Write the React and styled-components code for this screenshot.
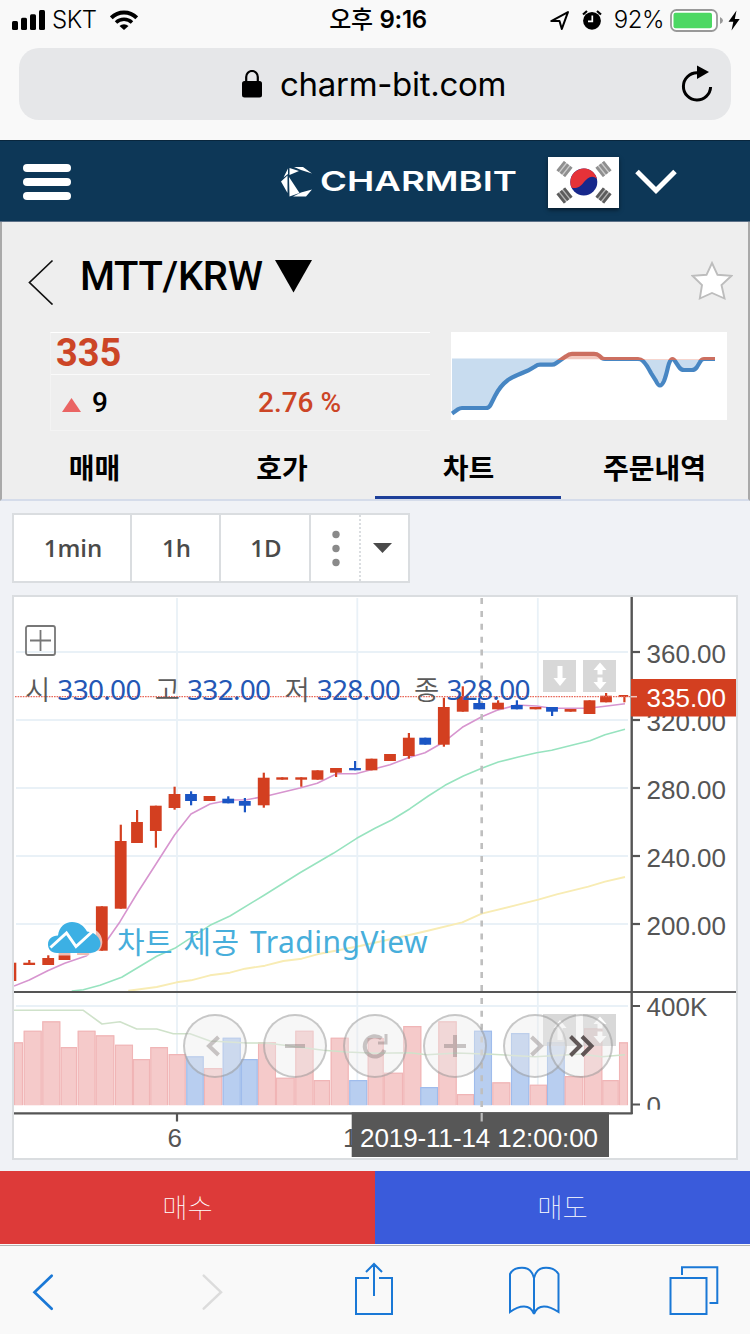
import React from "react";
import styled, { createGlobalStyle } from "styled-components";

const RED = "#d33f20";
const BLUE = "#1a55c4";

// [x, body top, body bottom, high, low, blue]
const candles = [
  [29.2, 962.7, 965, 960, 965],
  [48.2, 958, 965, 955.3, 965],
  [64.5, 953, 960, 953, 960],
  [83, 950, 955, 950, 955],
  [101.8, 906.3, 950.7, 906.3, 950.7],
  [120.7, 841, 908.7, 824.7, 908.7],
  [137, 822, 843, 810, 843],
  [155.8, 805.7, 831, 805.7, 847.7],
  [174.5, 794, 808, 786.7, 809.7],
  [191, 794, 801, 791.3, 805.3, 1],
  [209.5, 796, 801, 796, 801],
  [228.2, 798.7, 803.3, 796.3, 803.3, 1],
  [244.8, 801, 805.7, 798, 812.3, 1],
  [263.7, 777.7, 805.3, 772.7, 807.7],
  [282.2, 777.3, 779.7, 777.3, 779.7],
  [301.2, 777.3, 779.7, 777.3, 786.7],
  [317.5, 770.3, 779.7, 770.3, 779.7],
  [336, 768, 772.7, 768, 777],
  [355, 768, 770.3, 761, 770.3, 1],
  [371.5, 758.7, 770.3, 758.7, 770.3],
  [390, 754, 761, 754, 761],
  [408.8, 737.7, 756, 733, 758.7],
  [425.2, 737.7, 744.7, 737.7, 744.7, 1],
  [443.8, 707, 744.7, 697.7, 746.7],
  [462.7, 696, 711.7, 686.3, 711.7],
  [479.2, 703, 709.3, 697.7, 709.3, 1],
  [498, 702.7, 709.3, 700.3, 709.3],
  [516.8, 705, 709.3, 700.3, 709.3, 1],
  [535.5, 707, 709.3, 707, 709.3],
  [552, 707, 711.7, 707, 716, 1],
  [570.5, 709, 711.7, 709, 711.7],
  [589.5, 700.3, 714, 700.3, 714],
  [606, 695.7, 702.3, 693, 702.3],
];

// [left, right, top, blue]
const volumes = [
  [14, 23, 1042.3],
  [23.7, 41.7, 1030.7],
  [42.3, 60.3, 1021.3],
  [60.7, 77, 1047],
  [77.7, 95.5, 1030.7],
  [95.7, 114.3, 1035.3],
  [115, 133, 1044.7],
  [133, 150, 1059],
  [150.3, 168, 1047],
  [168.7, 185.7, 1054],
  [186.3, 203.7, 1056.3, 1],
  [204, 222.3, 1068],
  [222.7, 240.7, 1037.7, 1],
  [241, 257.7, 1059, 1],
  [258, 276, 1042.3],
  [276, 294.7, 1077.7],
  [295.3, 313.5, 1030.7],
  [313.7, 330, 1080],
  [330.7, 348.7, 1037.7],
  [349.3, 367.3, 1080, 1],
  [367.7, 383.7, 1038],
  [383.7, 403, 1072.7],
  [403.3, 421.3, 1026],
  [420.3, 438, 1087, 1],
  [438.3, 456.7, 1021.3],
  [457, 474, 1094],
  [474, 492, 1030.7, 1],
  [492.3, 510.3, 1082.3],
  [511, 529.3, 1033, 1],
  [529.7, 547, 1084.7],
  [547, 564.7, 1042.3, 1],
  [564.7, 583.3, 1076],
  [584, 602.3, 1028.3],
  [602.3, 618.7, 1080],
  [619, 628, 1042.3],
];

const maShort =
  "14,986 29.3,980 47.7,970.7 64.7,963.3 86.7,955.7 106.7,940.7 120,921.7 136.7,894 156,864 174.7,834.7 191,814 210,804 230,800 246.7,799.7 266.7,796 300,788 317.3,783.3 336.7,773.7 356,773.7 370,770 390,764.7 408.3,757.7 425,752.7 444.3,741.7 462.3,727.3 481.7,716.7 497,710.3 516.7,705 536.7,706 551.7,708.3 571.7,708.3 588.3,708.3 605,706.3 625,703.7";
const maMid =
  "71.7,991 83.3,989.7 100,985.3 121.7,977.3 156.7,956.3 174.7,948.3 210,925.3 230,916 263.3,895.7 300,872.7 333.3,853.3 356.7,838.3 375,828.3 391.7,820 410,808.7 428.3,796 445,785.3 463.3,776 481.7,768.3 498.3,762 518.3,757 536.7,752.7 551.7,750.3 571.7,745.3 590,740.7 605,734.7 625,729.3";
const maLong =
  "128.3,990.7 156.7,987 176.7,982.3 191,980.3 210,975.3 230,972.7 245,968.7 265,965.7 283.3,961 301.7,958.7 320,953.7 360,946 408.3,935.3 426.7,931 462.3,922.3 481.7,913.7 518.3,904.7 538.3,899.7 556.7,894.3 588.3,886.7 605,881.7 625,877";
const maVolume =
  "14,1010.3 83.3,1010.3 102,1024 120,1021.7 136.7,1029 156.7,1029 173.3,1033.7 190,1033.7 210,1041 246.7,1043 266.7,1043 300,1047.3 323.3,1050.3 346.7,1052 375,1053.3 410,1052.7 426.7,1054.7 456.7,1053 491.7,1054.3 535,1056.7 581.7,1054 601.7,1056.7 625,1054.7";

const sparkPath =
  "M452 413.5 L458 409.3 Q460 408 462 408 H486 Q489 408 490.5 405 L495 396 Q500 386 508 380 Q511 377.5 528 370.5 L535 366.5 Q537.5 364.7 540 364.7 H552 Q554 364.7 556 363.2 L566 356.3 Q569 353.8 572 353.8 H594 Q597 353.8 599 355.5 L601 357.3 Q602.5 359 605 359 H638 Q641 359 643 361 Q647 365 651 373 L656 381 Q660 390 664 381 Q666 376 668 367 Q671 355 675 361 L679 367 Q681 370 684 370 H692 Q695 370 697 367 L700 362 Q701.5 359 704 359 H715";

const ticks = [
  [652, "360.00", 662.7],
  [720, "320.00", 731],
  [788, "280.00", 799],
  [856, "240.00", 866.8],
  [924, "200.00", 934.8],
];

function Candle({ data }) {
  const [x, top, bottom, high, low, blue] = data;
  const fill = blue ? BLUE : RED;
  return (
    <g fill={fill}>
      <rect x={x - 1} y={high} width={2.2} height={low - high} />
      <rect x={x - 5.9} y={top} width={11.8} height={bottom - top} />
    </g>
  );
}

function Chart() {
  return (
    <svg viewBox="14 597 722 561" width="722" height="561">
      <g stroke="#e9f1f7" strokeWidth="1.8">
        {[177, 357.3, 537.8].map((x) => (
          <path key={x} d={`M${x} 598V1105`} />
        ))}
        {[652, 720, 788, 856, 924, 1006].map((y) => (
          <path key={y} d={`M16 ${y}H628`} />
        ))}
      </g>

      {volumes.map(([left, right, top, blue]) => (
        <g key={left}>
          <rect
            x={left}
            y={top}
            width={right - left}
            height={1105.3 - top}
            fill={blue ? "#b8cef0" : "#f5caca"}
          />
          <path
            d={`M${left + 0.5} 1105V${top + 0.6}H${right - 0.5}V1105`}
            fill="none"
            stroke={blue ? "#9fbcec" : "#f0b5b6"}
            strokeWidth="1.1"
          />
        </g>
      ))}

      <g fill="none" strokeWidth="1.6" strokeLinejoin="round">
        <polyline points={maVolume} stroke="#cfe2ca" />
        <polyline points={maLong} stroke="#f8ecb4" strokeWidth="1.9" />
        <polyline points={maMid} stroke="#97e3bf" />
        <polyline points={maShort} stroke="#d795cf" />
      </g>

      <path
        d="M481.7 598V1112"
        stroke="#bfbfbf"
        strokeWidth="2.6"
        strokeDasharray="6 6.9"
      />

      <rect x="14" y="962.7" width="2.3" height="18.3" fill={RED} />
      {candles.map((item) => (
        <Candle key={item[0]} data={item} />
      ))}
      <rect x="618.7" y="695" width="9.5" height="2" fill={RED} />
      <rect x="623.3" y="695" width="2.2" height="7.3" fill={RED} />
      <path
        d="M15 696.7H630"
        stroke="#e8685a"
        strokeWidth="1.3"
        strokeDasharray="1.6 1"
      />

      <path
        d="M57 953 A9.5 9.5 0 0 1 57 935 A15 15 0 0 1 86 931 A11 11 0 0 1 91 953 Z"
        fill="#fff"
        stroke="#fff"
        strokeWidth="5"
        opacity="0.65"
      />
      <path
        d="M57 953 C51 953 48 949 48 944.5 C48 939 52 935.5 58 935.5 C59 927 65 922 72 922 C79 922 84 926 87 931.5 C95 932 100.5 938 100.5 943.5 C100.5 949 96 953 90 953 Z"
        fill="#3cb0e4"
      />
      <path
        d="M50.5 947.5 L66.5 933 L76 946.5 L93 931"
        fill="none"
        stroke="#fff"
        strokeWidth="3"
      />

      <g stroke="#555" strokeWidth="2.2">
        <path d="M14 992H736" strokeWidth="1.8" />
        <path d="M631.7 597V1114" strokeWidth="2.4" />
        <path d="M14 1113.3H632.5" />
        <path d="M177 1113V1121.5" />
        {ticks.map(([y]) => (
          <path key={y} d={`M632 ${y}H640`} />
        ))}
        <path d="M632 1006H640M632 1104.5H640" />
      </g>

      <AxisText>
        {ticks.map(([y, label, base]) => (
          <text key={y} x="646.5" y={base}>
            {label}
          </text>
        ))}
        <text x="646.5" y="1016">
          400K
        </text>
        <text x="646.5" y="1115" clipPath="url(#zero)">
          0
        </text>
        <text x="167.5" y="1147.4">
          6
        </text>
        <text x="343" y="1147.4">
          1
        </text>
      </AxisText>
      <clipPath id="zero">
        <rect x="640" y="1090" width="40" height="19.7" />
      </clipPath>

      <rect x="631" y="679" width="105" height="37.5" fill={RED} />
      <path d="M631 696.7H637" stroke="#fff" strokeWidth="1.5" opacity="0.7" />
      <rect x="351.7" y="1112.3" width="257.3" height="44.7" fill="#575757" />
      <path d="M481.7 1113V1121.5" stroke="#bbb" strokeWidth="2.2" />
      <AxisText light>
        <text x="646.5" y="707.4">
          335.00
        </text>
        <text x="360" y="1147.4" textLength="238">
          2019-11-14 12:00:00
        </text>
      </AxisText>
    </svg>
  );
}

function Spark() {
  return (
    <svg viewBox="451 332 276 88" width="276" height="88" fill="none">
      <clipPath id="above">
        <rect x="451" y="332" width="264" height="28" />
      </clipPath>
      <clipPath id="below">
        <rect x="451" y="360" width="264" height="60" />
      </clipPath>
      <path d={`${sparkPath} V359.3 H452Z`} fill="#c8dcef" clipPath="url(#below)" />
      <path d={`${sparkPath} V359.3 H452Z`} fill="#f3c8bf" clipPath="url(#above)" />
      <path d="M452 359.3H560" stroke="#c8dcef" strokeWidth="1.4" />
      <g strokeWidth="4.2">
        <path d={sparkPath} stroke="#4786c3" clipPath="url(#below)" />
        <path d={sparkPath} stroke="#cc6f60" clipPath="url(#above)" />
      </g>
    </svg>
  );
}

function Flag() {
  const bars = [
    [564.5, 169, -52, "#8f8f8f"],
    [603.5, 169, 52, "#8f8f8f"],
    [564.5, 195.5, 52, "#5c5c5c"],
    [603.5, 195.5, -52, "#5c5c5c"],
  ];
  return (
    <FlagBox viewBox="548 157 71 51" width="71" height="51">
      <rect x="548" y="157" width="71" height="51" fill="#fff" />
      {bars.map(([x, y, angle, fill], i) => (
        <g key={i} transform={`translate(${x} ${y}) rotate(${angle})`} fill={fill}>
          <rect x="-6" y="-5.5" width="12" height="11" opacity="0.45" />
          <rect x="-6" y="-5.5" width="12" height="2.8" />
          <rect x="-6" y="-1.4" width="12" height="2.8" />
          <rect x="-6" y="2.7" width="12" height="2.8" />
        </g>
      ))}
      <circle cx="583.8" cy="182" r="13.5" fill="#17288c" />
      <path
        d="M571.5 187.5 A13.5 13.5 0 1 1 597 179 C592 174 587 178 584 182 C580 188 575 189 571.5 187.5Z"
        fill="#e63238"
      />
    </FlagBox>
  );
}

function App() {
  return (
    <Page>
      <Global />
      <StatusBar>
        <Carrier>
          <svg width="34" height="20" viewBox="0 0 34 20">
            <rect x="0" y="11" width="6" height="9" rx="1.5" />
            <rect x="9" y="7.7" width="6" height="12.3" rx="1.5" />
            <rect x="18" y="4.3" width="6" height="15.7" rx="1.5" />
            <rect x="27" y="0" width="6" height="20" rx="1.5" />
          </svg>
          <StatusText>SKT</StatusText>
          <svg width="28" height="20" viewBox="0 0 28 20" fill="none" stroke="#000">
            <path d="M1.3 7.8 A18 18 0 0 1 26.7 7.8" strokeWidth="3.9" />
            <path d="M6 12.5 A11.5 11.5 0 0 1 22 12.5" strokeWidth="3.5" />
            <path d="M9.5 16 A6.5 6.5 0 0 1 18.5 16 L14 20Z" fill="#000" stroke="none" />
          </svg>
        </Carrier>
        <Clock>
          <span>오후</span> 9:16
        </Clock>
        <Power>
          <svg width="19" height="19" viewBox="0 0 18 18" fill="none" stroke="#000" strokeWidth="1.9">
            <path d="M1.2 9.5 L17 1 L11.2 17 L9 9.5Z" strokeLinejoin="round" />
          </svg>
          <svg width="20" height="20" viewBox="0 0 20 20" fill="none">
            <circle cx="10" cy="10.8" r="8.9" fill="#000" />
            <path d="M1 4.5 L5 1 M19 4.5 L15 1" stroke="#000" strokeWidth="2.2" />
            <path d="M10.3 5.5V11.3H6" stroke="#fff" strokeWidth="1.7" />
          </svg>
          <StatusText>92%</StatusText>
          <svg width="70" height="23" viewBox="0 0 70 23">
            <rect x="1" y="1" width="46" height="21" rx="5.5" fill="#fff" stroke="#999" strokeWidth="1.8" />
            <rect x="3.5" y="3.7" width="38.5" height="15.6" rx="2" fill="#4cd863" />
            <path d="M50 8 Q53 9.5 53 11.5 Q53 13.5 50 15Z" fill="#999" />
            <path d="M66.5 1.5 L58.5 12.8 H63.3 L61.5 21.5 L69.7 10 H64.8Z" />
          </svg>
        </Power>
      </StatusBar>

      <AddressBar>
        <Lock width="20" height="28" viewBox="0 0 20 28">
          <rect x="0" y="11" width="20" height="16.5" rx="2.5" />
          <path d="M4.2 12V7 A5.8 6 0 0 1 15.8 7V12" fill="none" stroke="#000" strokeWidth="2.2" />
        </Lock>
        <Url>charm-bit.com</Url>
        <Reload width="32" height="38" viewBox="0 0 32 38">
          <path d="M16 7.8 A13.6 13.6 0 1 0 29.6 22" fill="none" stroke="#000" strokeWidth="3" />
          <path d="M16 0.5 L28 7 L16 14Z" />
        </Reload>
      </AddressBar>

      <Header>
        <Menu>
          <span />
          <span />
          <span />
        </Menu>
        <Logo width="236" height="32" viewBox="281 165 236 32">
          <path d="M281 180.5 L287.5 174.5 V192Z M283.5 176.5 L288 167.5 V173Z M289.5 167 L299 170 L289.5 174Z M294 166 H303 L312 172.5 L301 169Z M289 176 L299.5 192 L289.5 195.5Z M301 191.5 L312 188.5 L306 195.5 H293Z" />
          <text x="320" y="190.2" textLength="197" lengthAdjust="spacingAndGlyphs">
            CHARMBIT
          </text>
        </Logo>
        <Flag />
        <svg width="42" height="26" viewBox="0 0 42 26" fill="none" stroke="#fff" strokeWidth="5">
          <path d="M2 2.5 L21 21.5 L40 2.5" />
        </svg>
      </Header>

      <Panel>
        <TitleRow>
          <svg width="26" height="46" viewBox="0 0 26 46" fill="none" stroke="#111" strokeWidth="1.7">
            <path d="M24.5 1.5 L1.5 23.5 L24.5 45.5" />
          </svg>
          <Pair>MTT/KRW</Pair>
          <Dropdown width="37" height="33" viewBox="0 0 37 33">
            <path d="M0 0H37L18.5 32.5Z" />
          </Dropdown>
          <Star width="42" height="40" viewBox="0 0 42 40">
            <path
              d="M21 2 L26.5 13.8 L40.5 14.8 L30.5 24 L33.5 37.5 L21 32 L8.8 37.5 L11 24 L1.5 14.8 L15.5 13.8Z"
              fill="#fff"
              stroke="#bdbdbd"
              strokeWidth="1.9"
            />
          </Star>
        </TitleRow>
        <Summary>
          <Quote>
            <Price>335</Price>
            <Change>
              <svg width="19" height="14" viewBox="0 0 19 14">
                <path d="M9.5 0 L19 14 H0Z" fill="#ea6463" />
              </svg>
              <Diff>9</Diff>
              <Percent>2.76 %</Percent>
            </Change>
          </Quote>
          <SparkBox>
            <Spark />
          </SparkBox>
        </Summary>
        <Tabs>
          <Tab>매매</Tab>
          <Tab>호가</Tab>
          <Tab active>차트</Tab>
          <Tab>주문내역</Tab>
        </Tabs>
      </Panel>

      <Content>
        <Intervals>
          <Interval width={118}>1min</Interval>
          <Interval width={89}>1h</Interval>
          <Interval width={90}>1D</Interval>
          <More>
            <svg width="8" height="37" viewBox="0 0 8 37" fill="#8a8a8a">
              <circle cx="4" cy="4.5" r="3.7" />
              <circle cx="4" cy="18.5" r="3.7" />
              <circle cx="4" cy="32.5" r="3.7" />
            </svg>
          </More>
          <Caret>
            <svg width="19" height="10" viewBox="0 0 19 10">
              <path d="M0 0H19L9.5 10Z" fill="#4a4a4a" />
            </svg>
          </Caret>
        </Intervals>

        <ChartBox>
          <Chart />
          <Expand width="31" height="31" viewBox="0 0 31 31" fill="none" stroke="#777" strokeWidth="1.8">
            <rect x="1" y="1" width="29" height="29" rx="2" />
            <path d="M5 15.5H26M15.5 5V26" />
          </Expand>
          <Legend>
            {[
              ["시", "330.00"],
              ["고", "332.00"],
              ["저", "328.00"],
              ["종", "328.00"],
            ].map(([label, value]) => (
              <LegendItem key={label}>
                {label}
                <b>{value}</b>
              </LegendItem>
            ))}
          </Legend>
          <Credit>차트 제공 TradingView</Credit>
          <PaneTools top={63}>
            <PaneButton>
              <svg width="14" height="22" viewBox="0 0 14 22" fill="#fff">
                <path d="M4.5 1H9.5V13H13.5L7 21L0.5 13H4.5Z" />
              </svg>
            </PaneButton>
            <PaneButton>
              <svg width="14" height="28" viewBox="0 0 14 28" fill="#fff">
                <path d="M7 0.5L13.5 8H9.5V12.5H4.5V8H0.5Z M7 27.5L13.5 20H9.5V15.5H4.5V20H0.5Z" />
              </svg>
            </PaneButton>
          </PaneTools>
          <PaneTools top={416.5}>
            <PaneButton>
              <svg width="14" height="22" viewBox="0 0 14 22" fill="#fff">
                <path d="M4.5 21H9.5V9H13.5L7 1L0.5 9H4.5Z" />
              </svg>
            </PaneButton>
            <PaneButton>
              <svg width="14" height="28" viewBox="0 0 14 28" fill="#fff">
                <path d="M7 0.5L13.5 8H9.5V12.5H4.5V8H0.5Z M7 27.5L13.5 20H9.5V15.5H4.5V20H0.5Z" />
              </svg>
            </PaneButton>
          </PaneTools>
          <Controls>
            <Round>
              <svg width="24" height="24" viewBox="0 0 24 24">
                <path d="M15.5 3 L6 12 L15.5 21" />
              </svg>
            </Round>
            <Round>
              <svg width="24" height="24" viewBox="0 0 24 24">
                <path d="M2 12H22" />
              </svg>
            </Round>
            <Round>
              <svg width="28" height="28" viewBox="0 0 28 28">
                <path d="M20.5 6.5 A10.2 10.2 0 1 0 23.5 18" />
                <path d="M25 2V11H17" strokeWidth="3" />
              </svg>
            </Round>
            <Round>
              <svg width="24" height="24" viewBox="0 0 24 24">
                <path d="M1 12H23M12 1V23" />
              </svg>
            </Round>
            <Round>
              <svg width="24" height="24" viewBox="0 0 24 24">
                <path d="M8.5 3 L18 12 L8.5 21" />
              </svg>
            </Round>
            <Round last>
              <svg width="28" height="24" viewBox="0 0 28 24">
                <path d="M3.5 2.5 L13 12 L3.5 21.5 M15 2.5 L24.5 12 L15 21.5" />
              </svg>
            </Round>
          </Controls>
        </ChartBox>
      </Content>

      <Orders>
        <Order>매수</Order>
        <Order sell>매도</Order>
      </Orders>

      <Toolbar>
        <svg width="22" height="38" viewBox="32 1273 22 38">
          <path d="M51.7 1275.7 L34.5 1292.2 L51.7 1308.7" strokeWidth="2.7" strokeLinecap="round" />
        </svg>
        <svg width="22" height="38" viewBox="201 1273 22 38">
          <path d="M203.7 1275.7 L221 1292.2 L203.7 1308.7" stroke="#dcdcdc" strokeWidth="2.5" strokeLinecap="round" />
        </svg>
        <svg width="40" height="54" viewBox="354 1261 40 54">
          <path d="M369 1277H356V1313H392V1277H379M374 1295V1263M366 1271L374 1263L382 1271" />
        </svg>
        <svg width="52" height="50" viewBox="508 1267 52 50">
          <path d="M534 1279V1315 C532 1309.5 529 1307.5 524 1307.5 C518 1307.5 514 1310 510 1313V1275 C512 1271 517 1268.8 522 1268.8 C528 1268.8 532.5 1272.5 534 1279 C535.5 1272.5 540 1268.8 546 1268.8 C551 1268.8 556 1271 558.5 1275V1313 C554 1310 550 1307.5 544 1307.5 C539 1307.5 536 1309.5 534 1315" />
        </svg>
        <svg width="50" height="50" viewBox="669 1265 50 50">
          <path d="M670.5 1277H706.5V1313H670.5ZM682 1274V1266.3H717.3V1302H709.5" />
        </svg>
      </Toolbar>
    </Page>
  );
}

const Global = createGlobalStyle`
  * {
    box-sizing: border-box;
  }

  body {
    margin: 0;
  }

  svg {
    display: block;
    flex: none;
  }
`;

const Page = styled.div`
  width: 750px;
  height: 1334px;
  overflow: hidden;
  display: flex;
  flex-direction: column;
  background: #f9f9f9;
  color: #000;
  font-family: Roboto, "Noto Sans CJK KR", sans-serif;
`;

const StatusBar = styled.div`
  height: 40px;
  display: grid;
  grid-template-columns: 1fr auto 1fr;
  align-items: center;
  padding: 0 10px 0 12px;
`;

const Carrier = styled.div`
  display: flex;
  align-items: center;
  gap: 6px;

  svg:last-child {
    margin-left: 8px;
  }
`;

const StatusText = styled.span`
  font: 300 24px/28px Inter, sans-serif;
  letter-spacing: -0.5px;
`;

const Clock = styled.span`
  font: 600 24px/28px Inter, "Noto Sans CJK KR", sans-serif;
  letter-spacing: -0.3px;
  padding-left: 4px;

  span {
    font-weight: 500;
    margin-right: 1px;
  }
`;

const Power = styled.div`
  display: flex;
  align-items: center;
  justify-content: flex-end;

  svg:nth-child(2) {
    margin: 0 12px 0 13px;
  }

  svg:last-child {
    margin-left: 6px;
  }
`;

const AddressBar = styled.div`
  height: 72px;
  margin: 8px 19px 20px;
  border-radius: 20px;
  background: #e6e7e9;
  display: flex;
  align-items: center;
`;

const Lock = styled.svg`
  margin-left: 223px;
`;

const Url = styled.span`
  font: 400 33px/40px Inter, sans-serif;
  letter-spacing: -0.3px;
  margin-left: 18px;
`;

const Reload = styled.svg`
  margin: 0 18px 0 auto;
`;

const Header = styled.header`
  height: 82px;
  padding: 2px 73px 0 23px;
  background: #0d3757;
  border-top: 1px solid #09263d;
  border-bottom: 1px solid #5c7188;
  display: flex;
  align-items: center;
`;

const Menu = styled.div`
  display: grid;
  gap: 6px;

  span {
    width: 47.5px;
    height: 8px;
    border-radius: 4px;
    background: #fff;
  }
`;

const Logo = styled.svg`
  margin: 0 31px 0 210.5px;
  fill: #fff;
  font: 600 27px Inter, sans-serif;
`;

const FlagBox = styled.svg`
  margin: 0 16px 0 0;
  box-shadow: 0 2px 4px rgba(0, 0, 0, 0.5);
`;

const Panel = styled.section`
  height: 279px;
  background: #eee;
  border: solid #a9a9a9;
  border-width: 0 2px;
  border-bottom: 2px solid #d5dcea;
`;

const TitleRow = styled.div`
  height: 110px;
  display: flex;
  align-items: center;
  padding: 10px 15px 0 26px;
`;

const Pair = styled.h1`
  margin: -10px 0 0;
  font: 500 40px/48px Roboto, sans-serif;
  padding-left: 26px;
  letter-spacing: -0.3px;
`;

const Dropdown = styled.svg`
  margin: -11px auto 0 12px;
`;

const Star = styled.svg`
  margin-top: -2px;
`;

const Summary = styled.div`
  height: 100px;
  display: flex;
  justify-content: space-between;
  padding: 0 21px 0 48px;
`;

const Quote = styled.div`
  width: 380px;
  height: 99px;
  border: 1px solid #f3f3f3;
  border-top-color: #fff;
  border-right: 0;
`;

const Price = styled.div`
  height: 42px;
  padding-left: 5px;
  border-bottom: 1px solid #fafafa;
  color: #cc4526;
  font: 700 38px/40px Roboto, sans-serif;
`;

const Change = styled.div`
  height: 56px;
  display: flex;
  align-items: center;
  padding-left: 11px;
  font: 500 28px/34px Roboto, sans-serif;

  svg {
    margin-top: 4px;
  }
`;

const Diff = styled.span`
  width: 177px;
  padding-left: 11px;
`;

const Percent = styled.span`
  color: #cc4526;
`;

const SparkBox = styled.div`
  width: 276px;
  height: 88px;
  background: #fff;
`;

const Tabs = styled.nav`
  height: 67px;
  margin: 0 -2px;
  display: grid;
  grid-template-columns: 188px 187px 186px 186px;
`;

const Tab = styled.div`
  height: 67px;
  text-align: center;
  padding: 6px 0 0 1px;
  font: 700 28px/58px "Noto Sans CJK KR", sans-serif;
  border-bottom: 3px solid ${(props) => (props.active ? "#1d3f99" : "transparent")};
`;

const Content = styled.main`
  height: 670px;
  padding: 12px;
  background: #f0f2f6;
`;

const Intervals = styled.div`
  width: 398px;
  height: 70px;
  display: flex;
  background: #fff;
  border: 2px solid #dadde0;
`;

const Interval = styled.div`
  width: ${(props) => props.width}px;
  padding-left: 2px;
  border-right: 2px solid #dadde0;
  text-align: center;
  color: #4a4a4a;
  font: 600 24px/66px "Open Sans", sans-serif;
`;

const More = styled.div`
  flex: 1;
  display: flex;
  align-items: center;
  justify-content: center;
  padding-left: 2px;
  border-right: 2px dotted #dadde0;
`;

const Caret = styled(More)`
  flex: none;
  width: 47px;
  padding: 0 5px 0 0;
  border: 0;
`;

const ChartBox = styled.div`
  position: relative;
  width: 726px;
  height: 565px;
  margin-top: 12px;
  background: #fff;
  border: 2px solid #dadde0;
`;

const AxisText = styled.g`
  font: 26px "Liberation Sans", sans-serif;
  fill: ${(props) => (props.light ? "#fff" : "#555")};
`;

const Expand = styled.svg`
  position: absolute;
  left: 11px;
  top: 28px;
`;

const Legend = styled.div`
  position: absolute;
  left: 11px;
  top: 73px;
  display: flex;
`;

const LegendItem = styled.span`
  width: 129.7px;
  color: #5a5a5a;
  font: 350 27.5px/36px "Noto Sans CJK KR", sans-serif;
  display: flex;

  b {
    color: #2457b5;
    font: 400 28px/38px "Noto Sans", sans-serif;
    letter-spacing: -0.7px;
    margin-left: 7px;
  }
`;

const Credit = styled.div`
  position: absolute;
  left: 103px;
  top: 325px;
  color: #47aedb;
  font: 400 30px/40px "Noto Sans", "Noto Sans CJK KR", sans-serif;
  letter-spacing: 0.5px;
  word-spacing: 2px;
`;

const PaneTools = styled.div`
  position: absolute;
  left: 529px;
  top: ${(props) => props.top}px;
  display: flex;
  gap: 7px;
`;

const PaneButton = styled.div`
  width: 33px;
  height: 32px;
  background: rgba(190, 190, 190, 0.6);
  display: flex;
  align-items: center;
  justify-content: center;
`;

const Controls = styled.div`
  position: absolute;
  left: 169px;
  top: 417px;
  display: flex;
  gap: 16px;
`;

const Round = styled.div`
  width: 64px;
  height: 64px;
  margin-left: ${(props) => (props.last ? "-34px" : 0)};
  border: 2px solid rgba(100, 100, 100, 0.32);
  border-radius: 50%;
  background: rgba(235, 235, 235, 0.4);
  display: flex;
  align-items: center;
  justify-content: center;

  svg {
    fill: none;
    stroke: ${(props) => (props.last ? "rgba(80, 70, 70, 0.9)" : "rgba(120, 110, 110, 0.38)")};
    stroke-width: 4;
  }
`;

const Orders = styled.div`
  height: 73px;
  display: flex;
`;

const Order = styled.div`
  flex: 1;
  text-align: center;
  color: #fff;
  background: ${(props) => (props.sell ? "#3a5bdb" : "#dd3a39")};
  font: 100 27.5px/71px "Noto Sans CJK KR", sans-serif;
`;

const Toolbar = styled.footer`
  flex: 1;
  display: grid;
  grid-template-columns: 169px 153px 154px 161px auto;
  padding: 16px 0 0 32px;
  border-top: 1px solid #b2b2b2;
  margin-top: 1px;

  svg {
    fill: none;
    stroke: #1a78d6;
    stroke-width: 2;
  }

  svg:nth-child(-n + 2) {
    margin-top: 11px;
  }

  svg:nth-child(n + 4) {
    margin-top: 4px;
  }
`;

export default App;
